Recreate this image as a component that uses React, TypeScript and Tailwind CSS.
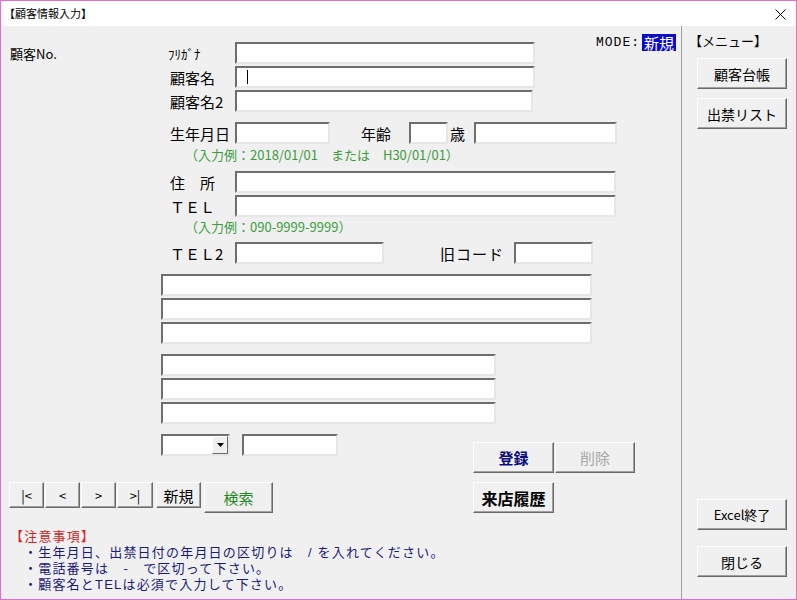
import React from "react";

const font = "font-['Noto_Sans_CJK_JP',_'Noto_Sans',_sans-serif]";

interface BoxProps {
  className?: string;
  children?: React.ReactNode;
}

// sunken text box, classic windows style
function Field({ className = "", children }: BoxProps) {
  return (
    <div
      className={`h-[22px] bg-white border-2 border-t-[#6e6e6e] border-l-[#6e6e6e] border-r-[#e6e6e6] border-b-[#e6e6e6] flex items-center ${className}`}
    >
      {children}
    </div>
  );
}

function Btn({ className = "", children }: BoxProps) {
  return (
    <button
      className={`bg-[#f0f0f0] border border-t-white border-l-white border-r-[#6a6a6a] border-b-[#6a6a6a] shadow-[inset_-1px_-1px_0_#a0a0a0] flex items-center justify-center leading-none ${className}`}
    >
      {children}
    </button>
  );
}

function Label({ children }: BoxProps) {
  return <span className="w-[225px] pl-[160px] text-[15px] leading-none text-black whitespace-nowrap">{children}</span>;
}

function Note({ children }: BoxProps) {
  return <div className="pl-[175px] text-[13px] leading-[14px] text-[#3c9c3c] whitespace-pre">{children}</div>;
}

export default function App() {
  return (
    <div className={`w-[797px] h-[600px] border border-[#e36bd3] flex flex-col bg-white ${font}`}>
      {/* title bar */}
      <div className="h-[25px] flex items-center justify-between pl-[3px] pr-[10px] bg-white">
        <span className="text-[11px] text-black leading-none">【顧客情報入力】</span>
        <svg width="11" height="11" viewBox="0 0 11 11" className="mt-[2px]">
          <path d="M0.5 0.5l10 10M10.5 0.5l-10 10" stroke="#000" strokeWidth="1" fill="none" />
        </svg>
      </div>

      <div className="flex-1 flex bg-[#f0f0f0]">
        {/* main form */}
        <div className="w-[680px] flex flex-col pl-[9px]">
          <div className="flex items-center h-[22px] mt-[16px]">
            <span className="w-[158px] text-[13px] leading-none">顧客No.</span>
            <span className="w-[67px] text-[13px] leading-none">ﾌﾘｶﾞﾅ</span>
            <Field className="w-[300px]" />
            <div className="self-start -mt-[8px] ml-[61px] flex items-center">
              <span className="text-[13px] leading-none tracking-[1px] font-['Liberation_Mono',_monospace] text-black">MODE:</span>
              <span className="ml-[2px] h-[17px] px-[2px] bg-[#0c0cc8] text-white text-[15px] leading-[17px]">新規</span>
            </div>
          </div>
          <div className="flex items-center h-[22px] mt-[2px]">
            <Label>顧客名</Label>
            <Field className="w-[300px]">
              <span className="ml-[10px] w-px h-[14px] bg-black" />
            </Field>
          </div>
          <div className="flex items-center h-[22px] mt-[2px]">
            <Label>顧客名2</Label>
            <Field className="w-[298px]" />
          </div>

          <div className="flex items-center h-[22px] mt-[10px]">
            <Label>生年月日</Label>
            <Field className="w-[95px]" />
            <span className="ml-[31px] w-[48px] text-[15px] leading-none">年齢</span>
            <Field className="w-[39px]" />
            <span className="ml-[2px] w-[24px] text-[15px] leading-none">歳</span>
            <Field className="w-[143px]" />
          </div>
          <div className="mt-[4px]">
            <Note>（入力例：2018/01/01　または　H30/01/01）</Note>
          </div>

          <div className="flex items-center h-[22px] mt-[9px]">
            <Label>住　所</Label>
            <Field className="w-[381px]" />
          </div>
          <div className="flex items-center h-[22px] mt-[2px]">
            <Label>ＴＥＬ</Label>
            <Field className="w-[381px]" />
          </div>
          <div className="mt-[3px]">
            <Note>（入力例：090-9999-9999）</Note>
          </div>

          <div className="flex items-center h-[22px] mt-[8px]">
            <Label>ＴＥＬ2</Label>
            <Field className="w-[149px]" />
            <span className="ml-[56px] w-[74px] text-[15px] leading-none tracking-[1px]">旧コード</span>
            <Field className="w-[79px]" />
          </div>

          <div className="flex flex-col gap-[2px] mt-[10px] ml-[151px]">
            <Field className="w-[431px]" />
            <Field className="w-[431px]" />
            <Field className="w-[431px]" />
          </div>
          <div className="flex flex-col gap-[2px] mt-[10px] ml-[151px]">
            <Field className="w-[335px]" />
            <Field className="w-[335px]" />
            <Field className="w-[335px]" />
          </div>

          <div className="flex items-start mt-[10px]">
            <div className="w-[463px] flex flex-col">
              <div className="flex items-center ml-[151px]">
                <Field className="w-[69px] justify-end">
                  <span className="w-[16px] h-[18px] bg-[#f0f0f0] border border-t-white border-l-white border-r-[#6a6a6a] border-b-[#6a6a6a] flex items-center justify-center">
                    <svg width="7" height="4" viewBox="0 0 7 4">
                      <path d="M0 0h7L3.5 4z" fill="#000" />
                    </svg>
                  </span>
                </Field>
                <Field className="ml-[12px] w-[96px]" />
              </div>
              <div className="flex items-start mt-[26px] -ml-[1px]">
                <div className="flex gap-[1px]">
                  <Btn className="w-[35px] h-[26px] text-[13px]">|&lt;</Btn>
                  <Btn className="w-[35px] h-[26px] text-[13px]">&lt;</Btn>
                  <Btn className="w-[35px] h-[26px] text-[13px]">&gt;</Btn>
                  <Btn className="w-[36px] h-[26px] text-[13px]">&gt;|</Btn>
                </div>
                <Btn className="ml-[3px] w-[45px] h-[26px] text-[15px]">新規</Btn>
                <Btn className="ml-[3px] w-[69px] h-[31px] text-[15px] text-[#1f8a1f]">検索</Btn>
              </div>
            </div>
            <div className="flex flex-col mt-[8px]">
              <div className="flex gap-[1px]">
                <Btn className="w-[81px] h-[31px] text-[15px] font-bold text-[#0a0a80]">登録</Btn>
                <Btn className="w-[80px] h-[31px] text-[15px] text-[#a8a8a8]">削除</Btn>
              </div>
              <Btn className="mt-[9px] w-[81px] h-[31px] text-[16px] font-bold text-black">来店履歴</Btn>
            </div>
          </div>

          <div className="mt-[16px] flex flex-col text-[13px] leading-[16px] tracking-[1.2px] whitespace-pre font-['Liberation_Sans',_'Noto_Sans_CJK_JP',_sans-serif]">
            <span className="text-[#d02424]">【注意事項】</span>
            <span className="pl-[14px] text-[#1a1a7a]">・生年月日、出禁日付の年月日の区切りは　/ を入れてください。</span>
            <span className="pl-[14px] text-[#1a1a7a]">・電話番号は　-　で区切って下さい。</span>
            <span className="pl-[14px] text-[#1a1a7a]">・顧客名とTELは必須で入力して下さい。</span>
          </div>
        </div>

        <div className="w-px bg-[#a0a0a0]" />

        {/* menu */}
        <div className="w-[114px] flex flex-col pl-[15px] pb-[22px]">
          <span className="mt-[8px] -ml-[8px] text-[13px] leading-[14px]">【メニュー】</span>
          <Btn className="mt-[10px] w-[90px] h-[31px] text-[14px]">顧客台帳</Btn>
          <Btn className="mt-[9px] w-[90px] h-[31px] text-[14px]">出禁リスト</Btn>
          <Btn className="mt-auto w-[90px] h-[31px] text-[13px]">Excel終了</Btn>
          <Btn className="mt-[16px] w-[90px] h-[31px] text-[14px]">閉じる</Btn>
        </div>
      </div>
    </div>
  );
}
